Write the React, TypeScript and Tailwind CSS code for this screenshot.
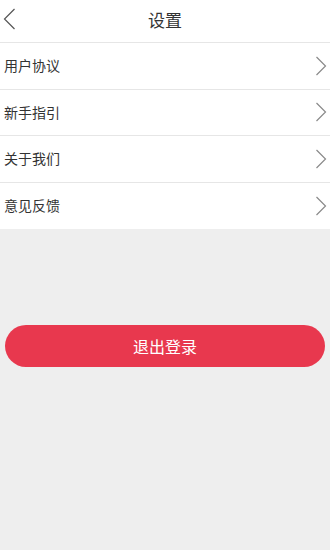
import React from "react";

const Chevron = ({ left = false }: { left?: boolean }) =>
  left ? (
    <svg width="13" height="22" viewBox="0 0 13 22" fill="none">
      <path d="M11.5 1 L1.5 11 L11.5 21" stroke="#555" strokeWidth="1.2" />
    </svg>
  ) : (
    <svg width="12" height="20" viewBox="0 0 12 20" fill="none">
      <path d="M1.5 1 L10.5 10 L1.5 19" stroke="#8a8a8a" strokeWidth="1.2" />
    </svg>
  );

const items = ["用户协议", "新手指引", "关于我们", "意见反馈"];

export default function App() {
  return (
    <div
      className="w-[330px] h-[550px] bg-[#eeeeee] flex flex-col"
      style={{ fontFamily: '"Noto Sans CJK SC", "Liberation Sans", sans-serif' }}
    >
      <div className="h-[43px] bg-white flex items-center relative border-b border-[#e6e6e6]">
        <div className="absolute left-[3px] top-[8px]">
          <Chevron left />
        </div>
        <div className="flex-1 text-center text-[17px] text-[#333] leading-none pb-[3px]">设置</div>
      </div>
      <div className="bg-white">
        {items.map((t, i) => (
          <div
            key={t}
            className={`h-[46.5px] flex items-center justify-between pl-[4px] pr-[3px] ${
              i < items.length - 1 ? "border-b border-[#e6e6e6]" : ""
            }`}
          >
            <span className="text-[14px] text-[#333]">{t}</span>
            <Chevron />
          </div>
        ))}
      </div>
      <div className="px-[5px] pt-[96px]">
        <div className="h-[42px] rounded-full bg-[#e8384e] flex items-center justify-center text-white text-[16px]">
          退出登录
        </div>
      </div>
    </div>
  );
}
